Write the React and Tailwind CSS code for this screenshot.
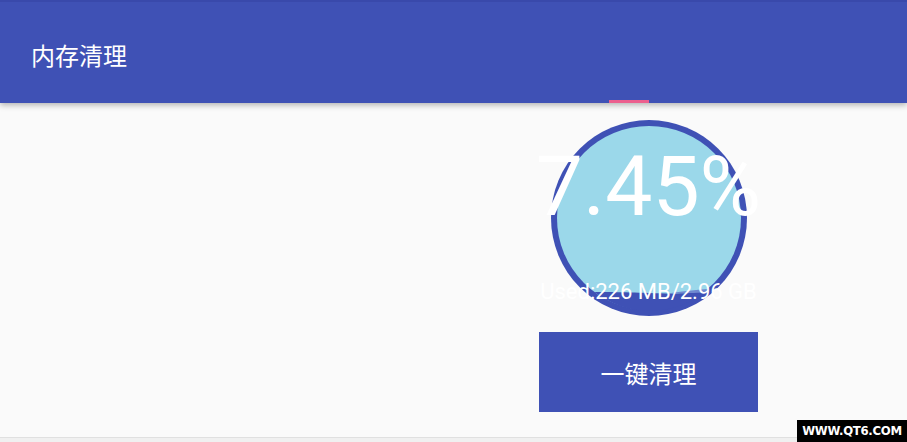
export default function App() {
  return (
    <div
      className="relative flex h-[442px] w-[907px] flex-col overflow-hidden bg-[#fafafa]"
      style={{ fontFamily: "Roboto, 'Noto Sans CJK SC', sans-serif" }}
    >
      <header className="relative z-10 flex h-[103px] shrink-0 items-center border-t-2 border-[#3949ab] bg-[#3f51b5] pl-[31px] pt-[8px] shadow-[0_2px_6px_rgba(0,0,0,0.3)]">
        <h1 className="text-[24px] font-normal text-white">内存清理</h1>
        <span className="absolute bottom-0 left-[609px] h-[3px] w-[40px] bg-[#ec5f8e]" />
      </header>

      <main className="flex flex-1 flex-col pl-[539px] pt-[17px]">
        <div className="flex w-[219px] flex-col items-center">
          <div className="relative h-[196px] w-[196px]">
            <svg width="196" height="196" viewBox="0 0 196 196">
              <circle cx="98" cy="98" r="98" fill="#3f51b5" />
              <circle cx="98" cy="98" r="92" fill="#9bd8ea" />
              {/* wave highlight */}
              <path d="M120 173 C132 171 145 170 156 169 L154 173 Z" fill="#6f88d0" />
              {/* used memory level */}
              <path d="M43.3 172 A92 92 0 0 0 154 172.5 C140 173 125 174 98 173 C70 172 55 172 43.3 172 Z" fill="#3f51b5" />
            </svg>
            <div className="absolute left-1/2 top-[25px] -translate-x-1/2 whitespace-nowrap text-[84px] leading-none text-white">
              7.45%
            </div>
            <div className="absolute left-1/2 top-[161px] -translate-x-1/2 whitespace-nowrap text-[22px] leading-none text-white">
              Used:226 MB/2.96 GB
            </div>
          </div>
          <button className="mt-[16px] flex h-[80px] w-[219px] items-center justify-center bg-[#3f51b5] pt-[5px] text-[24px] text-white">
            一键清理
          </button>
        </div>
      </main>

      <div className="h-[5px] shrink-0 border-t border-[#e0e0e0] bg-[#f0f0f0]" />

      <div
        className="absolute bottom-0 right-0 flex h-[22px] w-[110px] items-center justify-center bg-black text-[13px] font-bold tracking-[-0.3px] text-white"
        style={{ fontFamily: "'DejaVu Sans Condensed', 'DejaVu Sans', sans-serif" }}
      >
        WWW.QT6.COM
      </div>
    </div>
  );
}
